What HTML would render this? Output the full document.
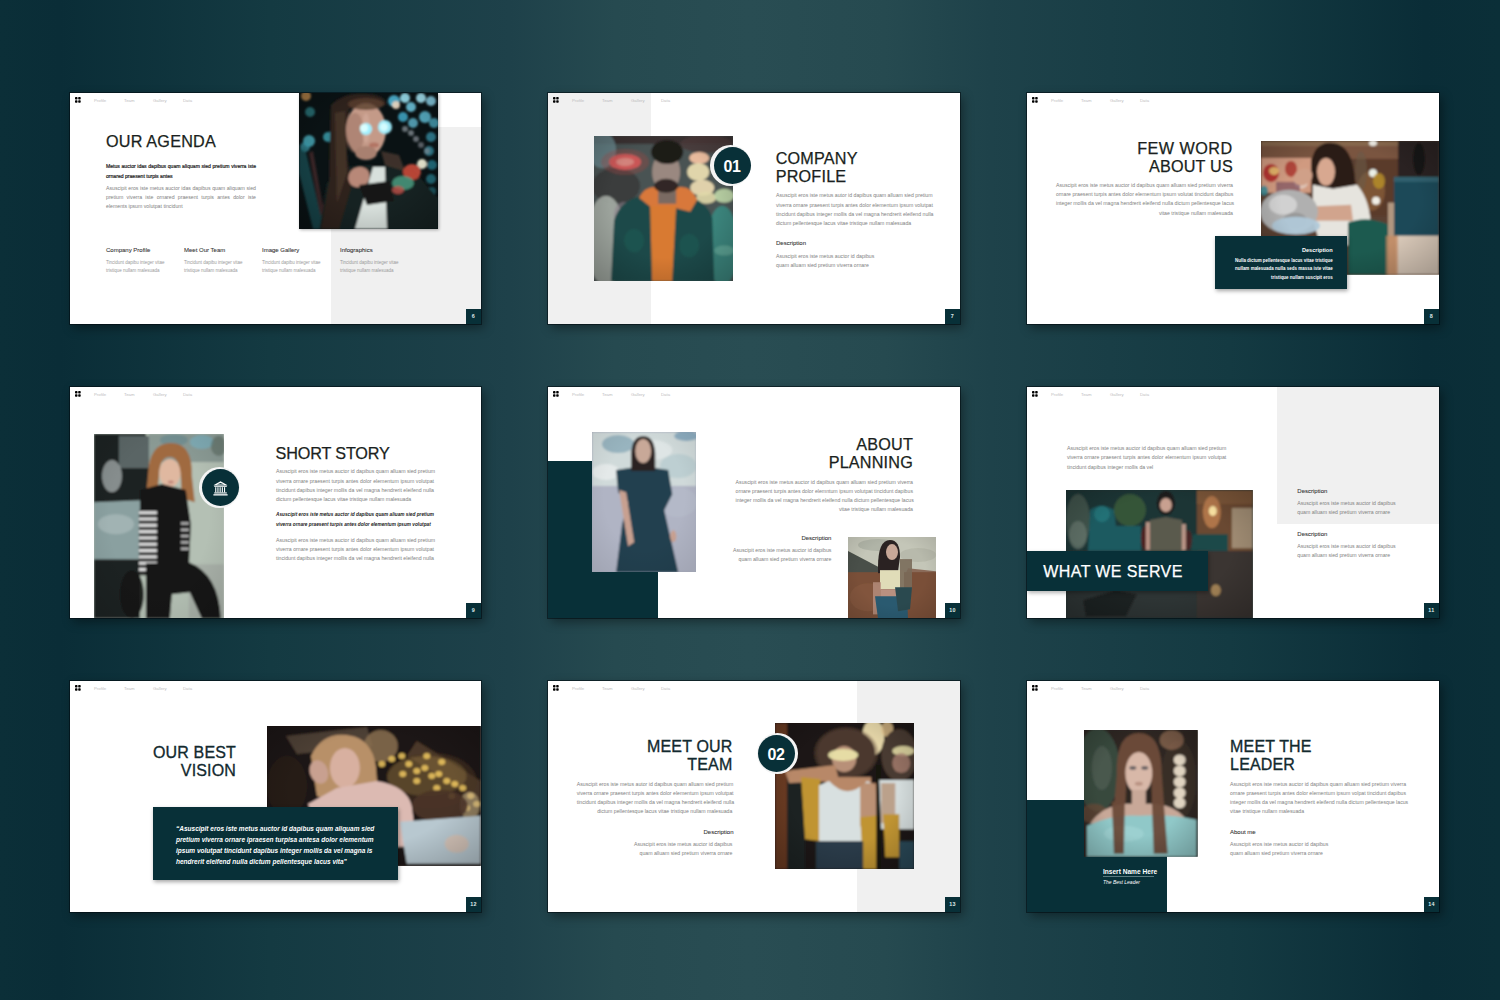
<!DOCTYPE html><html><head><meta charset="utf-8"><style>
*{margin:0;padding:0;box-sizing:border-box}
html,body{width:1500px;height:1000px;overflow:hidden}
body{position:relative;font-family:"Liberation Sans",sans-serif;
background:linear-gradient(90deg,#0b2f38 0%,#0a2d37 4%,#143a42 18%,#1e414a 34%,#264a50 41%,#294d53 50%,#264a50 59%,#1e424a 66%,#143a42 82%,#0a2d37 95%,#0b2f38 100%);}
.sl{position:absolute;height:231px;background:#fff;overflow:hidden;box-shadow:0 0 0 1px rgba(0,10,15,.55),3px 4px 10px rgba(0,0,0,.4)}
.t{position:absolute;white-space:nowrap;overflow:visible}
.ph{position:absolute;overflow:hidden}
.ph svg{display:block;width:100%;height:100%}
.ti{font-size:16.2px;color:#1a1f20;-webkit-text-stroke:0.25px #1a1f20;letter-spacing:0.2px}
.tib{font-size:16px;color:#12292e;-webkit-text-stroke:0.32px #12292e;letter-spacing:0.15px}
.tiw{font-size:16px;color:#fff;-webkit-text-stroke:0.25px #fff;letter-spacing:0.4px}
.bd{font-size:5.1px;color:#222;-webkit-text-stroke:0.2px #222}
.gy{font-size:5.2px;color:#828282}
.hd{font-size:6px;color:#333;-webkit-text-stroke:0.08px #333}
.hdw{font-size:5.6px;color:#fff;font-weight:bold}
.wt{font-size:4.45px;color:#fff;font-weight:bold}
.sm{font-size:4.5px;color:#9a9a9a}
.bi{font-size:4.74px;color:#222;font-weight:bold;font-style:italic}
.qt{font-size:6.5px;color:#fff;font-weight:bold;font-style:italic}
.nm{font-size:6.6px;color:#fff;font-weight:bold}
.it{font-size:5px;color:#fff;font-style:italic}
.nv{position:absolute;top:4.5px;font-size:4.3px;line-height:5px;color:#bdbdbd}
.ic{position:absolute;left:4.8px;top:4.3px;width:6px;height:6px}
.ic i{position:absolute;width:2.5px;height:2.5px;background:#000;border-radius:0.9px}
.ic i:nth-child(1){left:0;top:0}.ic i:nth-child(2){left:3px;top:0}.ic i:nth-child(3){left:0;top:3px}.ic i:nth-child(4){left:3px;top:3px}
.pn{position:absolute;top:216px;width:15px;height:15px;background:#083038;color:#dfe9ea;font-size:5.4px;font-weight:bold;line-height:15px;text-align:center;letter-spacing:0.3px}
.circ{position:absolute;width:37px;height:37px;border-radius:50%;background:#083038;color:#fff;font-size:16px;font-weight:bold;letter-spacing:-0.4px;line-height:37px;text-align:center;display:flex;align-items:center;justify-content:center;text-indent:-0.4px;padding-top:1.4px}
</style></head><body><div class="sl" style="left:70px;top:93px;width:411px;"><div style="position:absolute;left:261px;top:34px;width:150px;height:197px;background:#f0f0f0"></div><div class="ph" style="left:229px;top:0;width:139px;height:136px;box-shadow:1px 1px 3px rgba(0,0,0,.3)"><svg viewBox="0 0 139 136" preserveAspectRatio="none"><defs><filter id="fp1" x="-30%" y="-30%" width="160%" height="160%"><feGaussianBlur stdDeviation="1.1"/></filter><radialGradient id="vp1" cx="50%" cy="45%" r="70%"><stop offset="55%" stop-color="#000" stop-opacity="0"/><stop offset="100%" stop-color="#000" stop-opacity="0.22"/></radialGradient></defs><rect width="139" height="136" fill="#0a1214"/><g filter="url(#fp1)"><ellipse cx="7" cy="3" rx="5" ry="5" fill="#c89050" opacity="0.8"/><ellipse cx="11" cy="19" rx="5" ry="5" fill="#2a7a80" opacity="0.8"/><ellipse cx="29" cy="44" rx="5" ry="5" fill="#3a9aa8" opacity="0.85"/><ellipse cx="10" cy="48" rx="6" ry="6" fill="#4ab0c0" opacity="0.8"/><ellipse cx="6" cy="54" rx="5" ry="5" fill="#3a98a8" opacity="0.7"/><ellipse cx="95" cy="8" rx="6" ry="6" fill="#50b8d8" opacity="0.9"/><ellipse cx="97" cy="12" rx="4" ry="4" fill="#f0d8c0" opacity="0.9"/><ellipse cx="106" cy="5" rx="5" ry="5" fill="#9ae0f0" opacity="0.95"/><ellipse cx="112" cy="14" rx="5" ry="5" fill="#70c8e0" opacity="0.9"/><ellipse cx="122" cy="5" rx="5" ry="5" fill="#a8e8f8" opacity="0.95"/><ellipse cx="132" cy="8" rx="5" ry="5" fill="#90d8f0" opacity="0.9"/><ellipse cx="104" cy="24" rx="5" ry="5" fill="#40a8c8" opacity="0.85"/><ellipse cx="114" cy="30" rx="5" ry="5" fill="#60b8d0" opacity="0.8"/><ellipse cx="126" cy="24" rx="6" ry="6" fill="#60c0d8" opacity="0.85"/><ellipse cx="135" cy="30" rx="5" ry="5" fill="#50b0c8" opacity="0.8"/><ellipse cx="132" cy="44" rx="5" ry="5" fill="#3a98b0" opacity="0.75"/><ellipse cx="130" cy="58" rx="5" ry="5" fill="#3a9ab0" opacity="0.7"/><ellipse cx="133" cy="72" rx="5" ry="5" fill="#2a8aa0" opacity="0.7"/><ellipse cx="132" cy="86" rx="5" ry="5" fill="#2a8898" opacity="0.7"/><ellipse cx="133" cy="98" rx="4" ry="4" fill="#2a8090" opacity="0.6"/><ellipse cx="123" cy="71" rx="5" ry="5" fill="#e8e8d0" opacity="0.95"/><ellipse cx="106" cy="36" rx="3" ry="3" fill="#9098a0" opacity="0.7"/><ellipse cx="112" cy="40" rx="3" ry="3" fill="#9098a0" opacity="0.7"/><ellipse cx="117" cy="46" rx="3" ry="3" fill="#8a9098" opacity="0.7"/><ellipse cx="122" cy="52" rx="3" ry="3" fill="#8a9098" opacity="0.6"/><ellipse cx="128" cy="58" rx="3" ry="3" fill="#8a9098" opacity="0.6"/><path d="M0 57 L6 55 L25 136 L14 136 L0 80 Z" fill="#1a6068" opacity="0.6"/><path d="M10 60 L14 58 L28 136 L24 136 Z" fill="#804040" opacity="0.4"/><path d="M20 136 L28 90 L45 75 L60 72 L90 72 L115 78 L139 105 L139 136 Z" fill="#182220" opacity="1"/><path d="M32 12 Q45 -2 70 1 Q88 3 87 12 L50 16 L48 60 L52 95 L40 136 L22 136 L30 90 L31 40 Z" fill="#2e221c" opacity="1"/><path d="M36 20 L46 18 L48 80 L38 110 Z" fill="#5a4838" opacity="0.45"/><path d="M82 58 L100 62 L106 78 L86 72 Z" fill="#4a3a30" opacity="0.8"/><ellipse cx="67" cy="37" rx="20" ry="27" fill="#c49a88" opacity="1"/><ellipse cx="56" cy="40" rx="9" ry="20" fill="#9a7060" opacity="0.5"/><ellipse cx="67" cy="60" rx="11" ry="7" fill="#a88070" opacity="1"/><ellipse cx="67" cy="35" rx="4" ry="15" fill="#d8b0a0" opacity="0.5"/><ellipse cx="67" cy="11" rx="18" ry="6" fill="#5a4030" opacity="0.8"/><ellipse cx="67" cy="36" rx="6" ry="6" fill="#a0f0ff" opacity="1"/><ellipse cx="86" cy="34" rx="7" ry="7" fill="#a0f0ff" opacity="0.95"/><ellipse cx="65" cy="35" rx="4" ry="4" fill="#e0ffff" opacity="0.9"/><ellipse cx="85" cy="34" rx="4" ry="4" fill="#e0ffff" opacity="0.8"/><ellipse cx="75" cy="52" rx="5" ry="2.5" fill="#b07060" opacity="0.9"/><ellipse cx="60" cy="84" rx="11" ry="10" fill="#b88878" opacity="1" transform="rotate(-30 60 84)"/><path d="M74 74 L86 74 L88 136 L56 136 Z" fill="#d8e0dc" opacity="1"/><path d="M60 92 L90 88 L95 108 L68 112 Z" fill="#121816" opacity="1"/><ellipse cx="113" cy="79" rx="9" ry="8" fill="#c04838" opacity="0.95"/><ellipse cx="104" cy="90" rx="11" ry="7" fill="#4a9a80" opacity="0.85"/><ellipse cx="99" cy="97" rx="6" ry="4" fill="#c05048" opacity="0.8"/></g><rect width="139" height="136" fill="url(#vp1)"/></svg></div><div class="t ti" style="left:36px;top:38.70px;width:200px;height:18px;line-height:18px;text-align:left;">OUR AGENDA</div><div class="t bd" style="left:36px;top:69.20px;width:150px;height:9px;line-height:9px;text-align:left;text-align:justify;text-align-last:justify;">Metus auctor idas dapibus quam aliquam sied pretium viverra iste</div><div class="t bd" style="left:36px;top:78.70px;width:150px;height:9px;line-height:9px;text-align:left;">ornared praesent turpis antes</div><div class="t gy" style="left:36px;top:90.80px;width:150px;height:9px;line-height:9px;text-align:left;text-align:justify;text-align-last:justify;">Asuscipit eros iste metus auctor idas dapibus quam aliquam sied</div><div class="t gy" style="left:36px;top:99.90px;width:150px;height:9px;line-height:9px;text-align:left;text-align:justify;text-align-last:justify;">pretium viverra iste ornared praesent turpis antes dolor iste</div><div class="t gy" style="left:36px;top:109.10px;width:150px;height:9px;line-height:9px;text-align:left;">elements ipsum volutpat tincidunt</div><div class="t hd" style="left:36px;top:153.20px;width:70px;height:9px;line-height:9px;text-align:left;">Company Profile</div><div class="t sm" style="left:36px;top:166.00px;width:70px;height:8px;line-height:8px;text-align:left;">Tincidunt dapibu integer vitae</div><div class="t sm" style="left:36px;top:173.90px;width:70px;height:8px;line-height:8px;text-align:left;">tristique nullam malesuada</div><div class="t hd" style="left:114px;top:153.20px;width:70px;height:9px;line-height:9px;text-align:left;">Meet Our Team</div><div class="t sm" style="left:114px;top:166.00px;width:70px;height:8px;line-height:8px;text-align:left;">Tincidunt dapibu integer vitae</div><div class="t sm" style="left:114px;top:173.90px;width:70px;height:8px;line-height:8px;text-align:left;">tristique nullam malesuada</div><div class="t hd" style="left:192px;top:153.20px;width:70px;height:9px;line-height:9px;text-align:left;">Image Gallery</div><div class="t sm" style="left:192px;top:166.00px;width:70px;height:8px;line-height:8px;text-align:left;">Tincidunt dapibu integer vitae</div><div class="t sm" style="left:192px;top:173.90px;width:70px;height:8px;line-height:8px;text-align:left;">tristique nullam malesuada</div><div class="t hd" style="left:270px;top:153.20px;width:70px;height:9px;line-height:9px;text-align:left;">Infographics</div><div class="t sm" style="left:270px;top:166.00px;width:70px;height:8px;line-height:8px;text-align:left;">Tincidunt dapibu integer vitae</div><div class="t sm" style="left:270px;top:173.90px;width:70px;height:8px;line-height:8px;text-align:left;">tristique nullam malesuada</div><svg class="ic" width="6" height="6" viewBox="0 0 6 6"><rect x="0" y="0" width="2.5" height="2.5" rx="0.7" fill="#000"/><rect x="3.2" y="0" width="2.5" height="2.5" rx="0.7" fill="#000"/><rect x="0" y="3.2" width="2.5" height="2.5" rx="0.7" fill="#000"/><rect x="3.2" y="3.2" width="2.5" height="2.5" rx="0.7" fill="#000"/></svg><div class="nv" style="left:24px">Profile</div><div class="nv" style="left:54px">Team</div><div class="nv" style="left:83px">Gallery</div><div class="nv" style="left:113px">Data</div><div class="pn" style="left:396px">6</div></div><div class="sl" style="left:548px;top:93px;width:412px;"><div style="position:absolute;left:0px;top:0px;width:103px;height:231px;background:#f0f0f0"></div><div class="ph" style="left:45.7px;top:42.5px;width:139.3px;height:145.5px;"><svg viewBox="0 0 139 146" preserveAspectRatio="none"><defs><filter id="fp2" x="-30%" y="-30%" width="160%" height="160%"><feGaussianBlur stdDeviation="1.2"/></filter><radialGradient id="vp2" cx="50%" cy="45%" r="70%"><stop offset="55%" stop-color="#000" stop-opacity="0"/><stop offset="100%" stop-color="#000" stop-opacity="0.22"/></radialGradient></defs><rect width="139" height="146" fill="#4a5252"/><g filter="url(#fp2)"><rect x="0" y="0" width="139" height="146" fill="#4a5252" opacity="1"/><rect x="0" y="0" width="139" height="8" fill="#3a3232" opacity="1"/><ellipse cx="8" cy="14" rx="14" ry="18" fill="#6a8a90" opacity="0.8"/><ellipse cx="22" cy="50" rx="24" ry="18" fill="#3a3a3a" opacity="0.9"/><ellipse cx="12" cy="105" rx="20" ry="45" fill="#a0a8a0" opacity="0.95"/><ellipse cx="30" cy="80" rx="10" ry="14" fill="#8a7a88" opacity="0.5"/><ellipse cx="31" cy="26" rx="16" ry="8" fill="#e86060" opacity="0.95"/><ellipse cx="31" cy="26" rx="9" ry="4" fill="#f0a8a0" opacity="0.9"/><ellipse cx="31" cy="26" rx="24" ry="13" fill="#a04a48" opacity="0.35"/><ellipse cx="112" cy="8" rx="26" ry="9" fill="#4a3a3a" opacity="0.9"/><ellipse cx="105" cy="22" rx="10" ry="6" fill="#f0c0a0" opacity="0.95"/><ellipse cx="104" cy="36" rx="11" ry="9" fill="#e8dcb0" opacity="0.95"/><ellipse cx="108" cy="52" rx="12" ry="8" fill="#e8d8b0" opacity="0.95"/><ellipse cx="112" cy="62" rx="10" ry="6" fill="#e0d8a8" opacity="0.9"/><ellipse cx="130" cy="60" rx="10" ry="7" fill="#c0d8a8" opacity="0.9"/><ellipse cx="128" cy="110" rx="16" ry="40" fill="#3a8a80" opacity="0.9"/><ellipse cx="130" cy="115" rx="10" ry="5" fill="#70b0a0" opacity="0.6"/><path d="M17 146 L20 85 Q26 64 48 60 L90 60 Q112 64 118 82 L120 146 Z" fill="#1a4a48" opacity="1"/><ellipse cx="40" cy="105" rx="10" ry="12" fill="#235a55" opacity="0.6"/><ellipse cx="95" cy="110" rx="10" ry="12" fill="#235a55" opacity="0.6"/><path d="M45 62 Q52 48 66 52 L82 52 Q96 48 103 64 L96 76 L80 72 L60 74 Z" fill="#d8783a" opacity="1"/><path d="M56 70 L82 70 L78 146 L58 146 Z" fill="#d87a30" opacity="1"/><rect x="64" y="52" width="18" height="16" fill="#7a6a62" opacity="1"/><ellipse cx="72" cy="36" rx="14" ry="20" fill="#9a8880" opacity="1"/><ellipse cx="73" cy="16" rx="16" ry="12" fill="#1e1a18" opacity="1"/><ellipse cx="72" cy="50" rx="12" ry="7" fill="#2a2220" opacity="0.95"/></g><rect width="139" height="146" fill="url(#vp2)"/></svg></div><div style="position:absolute;left:162.25px;top:52.35px;width:40.7px;height:40.7px;border-radius:50%;background:#f4f4f4"></div><div class="circ" style="left:165.60px;top:54.10px;">01</div><div class="t ti" style="left:227.7px;top:56.00px;width:200px;height:18px;line-height:18px;text-align:left;">COMPANY</div><div class="t ti" style="left:227.7px;top:74.00px;width:200px;height:18px;line-height:18px;text-align:left;">PROFILE</div><div class="t gy" style="left:228px;top:98.20px;width:156px;height:9px;line-height:9px;text-align:left;text-align:justify;text-align-last:justify;">Asuscipit eros iste metus autor id dapibus quam alluam sied pretium</div><div class="t gy" style="left:228px;top:107.60px;width:156px;height:9px;line-height:9px;text-align:left;text-align:justify;text-align-last:justify;">viverra ornare praesent turpis antes dolor elementum ipsum volutpat</div><div class="t gy" style="left:228px;top:116.80px;width:156px;height:9px;line-height:9px;text-align:left;text-align:justify;text-align-last:justify;">tincidunt dapibus integer mollis da vel magna hendrerit eleifend nulla</div><div class="t gy" style="left:228px;top:125.90px;width:156px;height:9px;line-height:9px;text-align:left;">dictum pellentesque lacus vitae tristique nullam malesuada</div><div class="t hd" style="left:228px;top:146.40px;width:80px;height:9px;line-height:9px;text-align:left;">Description</div><div class="t gy" style="left:228px;top:159.20px;width:100px;height:9px;line-height:9px;text-align:left;">Asuscipit eros iste metus auctor id dapibus</div><div class="t gy" style="left:228px;top:168.20px;width:100px;height:9px;line-height:9px;text-align:left;">quam alluam sied pretium viverra ornare</div><svg class="ic" width="6" height="6" viewBox="0 0 6 6"><rect x="0" y="0" width="2.5" height="2.5" rx="0.7" fill="#000"/><rect x="3.2" y="0" width="2.5" height="2.5" rx="0.7" fill="#000"/><rect x="0" y="3.2" width="2.5" height="2.5" rx="0.7" fill="#000"/><rect x="3.2" y="3.2" width="2.5" height="2.5" rx="0.7" fill="#000"/></svg><div class="nv" style="left:24px">Profile</div><div class="nv" style="left:54px">Team</div><div class="nv" style="left:83px">Gallery</div><div class="nv" style="left:113px">Data</div><div class="pn" style="left:397px">7</div></div><div class="sl" style="left:1027px;top:93px;width:412px;"><div class="t ti" style="left:6px;top:45.50px;width:200px;height:18px;line-height:18px;text-align:right;letter-spacing:0.45px;margin-left:-0.45px">FEW WORD</div><div class="t ti" style="left:6px;top:64.10px;width:200px;height:18px;line-height:18px;text-align:right;">ABOUT US</div><div class="t gy" style="left:29px;top:87.80px;width:177px;height:9px;line-height:9px;text-align:right;text-align:justify;text-align-last:justify;">Asuscipit eros iste metus auctor id dapibus quam alluam sied pretium viverra</div><div class="t gy" style="left:29px;top:97.20px;width:177px;height:9px;line-height:9px;text-align:right;text-align:justify;text-align-last:justify;">ornare praesent turpis antes dolor elementum ipsum volutat tincidunt dapibus</div><div class="t gy" style="left:29px;top:106.40px;width:177px;height:9px;line-height:9px;text-align:right;text-align:justify;text-align-last:justify;">integer mollis da vel magna hendrerit eleifend nulla dictum pellentesque lacus</div><div class="t gy" style="left:29px;top:115.70px;width:177px;height:9px;line-height:9px;text-align:right;">vitae tristique nullam malesuada</div><div class="ph" style="left:234px;top:48px;width:178px;height:133.6px;"><svg viewBox="0 0 178 134" preserveAspectRatio="none"><defs><filter id="fp3" x="-30%" y="-30%" width="160%" height="160%"><feGaussianBlur stdDeviation="1.2"/></filter><radialGradient id="vp3" cx="50%" cy="45%" r="70%"><stop offset="55%" stop-color="#000" stop-opacity="0"/><stop offset="100%" stop-color="#000" stop-opacity="0.22"/></radialGradient></defs><rect width="178" height="134" fill="#4a3428"/><g filter="url(#fp3)"><rect x="0" y="0" width="178" height="134" fill="#5a4030" opacity="1"/><rect x="0" y="0" width="137" height="18" fill="#7a5540" opacity="1"/><rect x="0" y="0" width="137" height="5" fill="#8a6a50" opacity="1"/><rect x="94" y="18" width="43" height="57" fill="#5a3a2a" opacity="1"/><ellipse cx="110" cy="50" rx="14" ry="20" fill="#a07040" opacity="0.5"/><rect x="137" y="0" width="41" height="36" fill="#2a2420" opacity="1"/><ellipse cx="158" cy="18" rx="6" ry="16" fill="#141412" opacity="0.9"/><rect x="0" y="17" width="50" height="35" fill="#d09a80" opacity="1"/><ellipse cx="10" cy="32" rx="8" ry="9" fill="#b02a28" opacity="0.9"/><ellipse cx="13" cy="30" rx="5" ry="4" fill="#e8c070" opacity="0.9"/><ellipse cx="30" cy="28" rx="6" ry="8" fill="#a83028" opacity="0.8"/><ellipse cx="40" cy="42" rx="7" ry="6" fill="#e8e0d8" opacity="0.6"/><rect x="15" y="41" width="24" height="11" fill="#7a5060" opacity="0.7"/><ellipse cx="3" cy="50" rx="4" ry="5" fill="#2a8a98" opacity="0.8"/><ellipse cx="112" cy="2" rx="4" ry="3" fill="#f8f8f0" opacity="0.95"/><ellipse cx="112" cy="32" rx="4" ry="4" fill="#f0f8f0" opacity="0.95"/><ellipse cx="115" cy="60" rx="4" ry="4" fill="#f8f8f0" opacity="0.95"/><ellipse cx="117" cy="85" rx="4" ry="4" fill="#f8f8f0" opacity="0.9"/><ellipse cx="118" cy="40" rx="6" ry="8" fill="#b8902a" opacity="0.8"/><ellipse cx="100" cy="30" rx="6" ry="20" fill="#6a5a48" opacity="0.6"/><path d="M50 25 Q52 0 72 2 Q92 4 94 40 L96 56 L70 56 L52 55 Z" fill="#2a1a18" opacity="1"/><ellipse cx="65" cy="31" rx="9" ry="14" fill="#d8a890" opacity="1"/><ellipse cx="42" cy="36" rx="10" ry="8" fill="#d0a088" opacity="1" transform="rotate(-30 42 36)"/><path d="M52 44 L72 48 L96 44 Q110 60 110 90 L100 104 L60 106 L52 80 Z" fill="#e6e4de" opacity="1"/><path d="M43 66 L90 64 L92 80 L46 80 Z" fill="#d0a088" opacity="0.95"/><ellipse cx="28" cy="71" rx="29" ry="22" fill="#b0b0b0" opacity="1"/><ellipse cx="22" cy="64" rx="14" ry="10" fill="#e0e0e0" opacity="0.7"/><ellipse cx="34" cy="80" rx="12" ry="8" fill="#808080" opacity="0.5"/><ellipse cx="35" cy="85" rx="24" ry="9" fill="#b0c8d8" opacity="0.95"/><path d="M87 82 Q105 74 128 84 L134 134 L87 134 Z" fill="#1f5a50" opacity="1"/><rect x="127" y="62" width="51" height="72" fill="#d8c8b8" opacity="1"/><rect x="127" y="62" width="8" height="72" fill="#a88a70" opacity="0.8"/><rect x="133" y="36" width="45" height="59" fill="#1f4a58" opacity="1"/><rect x="133" y="36" width="45" height="5" fill="#3a6a78" opacity="0.7"/><rect x="125" y="95" width="12" height="39" fill="#c88a60" opacity="0.7"/></g><rect width="178" height="134" fill="url(#vp3)"/></svg></div><div style="position:absolute;left:188px;top:142.5px;width:132px;height:53px;background:#083038;box-shadow:1px 2px 4px rgba(0,0,0,.35)"></div><div class="t hdw" style="left:200px;top:153.20px;width:105.7px;height:9px;line-height:9px;text-align:right;">Description</div><div class="t wt" style="left:208px;top:164.05px;width:97.7px;height:8.5px;line-height:8.5px;text-align:right;text-align:justify;text-align-last:justify;">Nulla dictum pellentesque lacus vitae tristique</div><div class="t wt" style="left:208px;top:172.45px;width:97.7px;height:8.5px;line-height:8.5px;text-align:right;text-align:justify;text-align-last:justify;">nullam malesuada nulla seds massa iste vitae</div><div class="t wt" style="left:208px;top:181.05px;width:97.7px;height:8.5px;line-height:8.5px;text-align:right;">tristique nullam suscipit eros</div><svg class="ic" width="6" height="6" viewBox="0 0 6 6"><rect x="0" y="0" width="2.5" height="2.5" rx="0.7" fill="#000"/><rect x="3.2" y="0" width="2.5" height="2.5" rx="0.7" fill="#000"/><rect x="0" y="3.2" width="2.5" height="2.5" rx="0.7" fill="#000"/><rect x="3.2" y="3.2" width="2.5" height="2.5" rx="0.7" fill="#000"/></svg><div class="nv" style="left:24px">Profile</div><div class="nv" style="left:54px">Team</div><div class="nv" style="left:83px">Gallery</div><div class="nv" style="left:113px">Data</div><div class="pn" style="left:397px">8</div></div><div class="sl" style="left:70px;top:387px;width:411px;"><div class="ph" style="left:24px;top:46.6px;width:129.8px;height:184.4px;"><svg viewBox="0 0 130 184" preserveAspectRatio="none"><defs><filter id="fp4" x="-30%" y="-30%" width="160%" height="160%"><feGaussianBlur stdDeviation="1.0"/></filter><radialGradient id="vp4" cx="50%" cy="45%" r="70%"><stop offset="55%" stop-color="#000" stop-opacity="0"/><stop offset="100%" stop-color="#000" stop-opacity="0.1"/></radialGradient></defs><rect width="130" height="184" fill="#b4c0b4"/><g filter="url(#fp4)"><rect x="0" y="0" width="130" height="184" fill="#b4c0b4" opacity="1"/><rect x="55" y="0" width="75" height="28" fill="#8a9a94" opacity="1"/><ellipse cx="80" cy="6" rx="14" ry="6" fill="#6a8a90" opacity="0.7"/><ellipse cx="108" cy="8" rx="12" ry="7" fill="#7ab0c0" opacity="0.7"/><ellipse cx="125" cy="12" rx="8" ry="10" fill="#5a6a60" opacity="0.6"/><rect x="95" y="130" width="35" height="54" fill="#a8b0a8" opacity="1"/><path d="M0 0 L52 0 L56 40 L50 72 L0 72 Z" fill="#1e2424" opacity="1"/><rect x="25" y="2" width="30" height="32" fill="#5a6565" opacity="1"/><ellipse cx="18" cy="42" rx="10" ry="16" fill="#a0a8a8" opacity="0.8"/><path d="M0 68 L48 66 L46 125 L0 127 Z" fill="#8aa0a0" opacity="1"/><ellipse cx="22" cy="90" rx="18" ry="10" fill="#b0c0c0" opacity="0.6"/><rect x="0" y="125" width="46" height="59" fill="#1e2424" opacity="1"/><ellipse cx="38" cy="160" rx="12" ry="24" fill="#121414" opacity="0.9"/><path d="M54 42 Q55 9 77 9 Q99 9 98 42 L101 68 L88 64 L87 44 Q86 23 76 23 Q65 23 65 44 L63 62 L52 62 Z" fill="#a06a40" opacity="1"/><ellipse cx="76" cy="39" rx="10.5" ry="14" fill="#e0b8a0" opacity="1"/><ellipse cx="77" cy="48" rx="3" ry="1.5" fill="#b07068" opacity="0.7"/><path d="M46 56 L68 50 L92 56 L97 90 L95 133 L54 133 L46 100 Z" fill="#181818" opacity="1"/><rect x="45" y="76" width="18" height="65" fill="#2a2a2a" opacity="1"/><rect x="45" y="77.0" width="18" height="3" fill="#e8e8e8" opacity="0.95"/><rect x="45" y="83.3" width="18" height="3" fill="#e8e8e8" opacity="0.95"/><rect x="45" y="89.6" width="18" height="3" fill="#e8e8e8" opacity="0.95"/><rect x="45" y="95.9" width="18" height="3" fill="#e8e8e8" opacity="0.95"/><rect x="45" y="102.2" width="18" height="3" fill="#e8e8e8" opacity="0.95"/><rect x="45" y="108.5" width="18" height="3" fill="#e8e8e8" opacity="0.95"/><rect x="45" y="114.8" width="18" height="3" fill="#e8e8e8" opacity="0.95"/><rect x="45" y="121.1" width="18" height="3" fill="#e8e8e8" opacity="0.95"/><rect x="45" y="127.4" width="18" height="3" fill="#e8e8e8" opacity="0.95"/><rect x="45" y="133.7" width="18" height="3" fill="#e8e8e8" opacity="0.95"/><rect x="87" y="88.0" width="8" height="2.5" fill="#d8d8d8" opacity="0.8"/><rect x="87" y="94.3" width="8" height="2.5" fill="#d8d8d8" opacity="0.8"/><rect x="87" y="100.6" width="8" height="2.5" fill="#d8d8d8" opacity="0.8"/><rect x="87" y="106.9" width="8" height="2.5" fill="#d8d8d8" opacity="0.8"/><rect x="87" y="113.2" width="8" height="2.5" fill="#d8d8d8" opacity="0.8"/><ellipse cx="92" cy="140" rx="5" ry="6" fill="#d8b098" opacity="0.9"/><ellipse cx="60" cy="159" rx="5" ry="4" fill="#d8b098" opacity="0.9"/><path d="M52 129 L95 128 Q125 140 127 184 L108 184 L96 158 L78 160 L76 184 L52 184 Z" fill="#141414" opacity="1"/></g><rect width="130" height="184" fill="url(#vp4)"/></svg></div><div style="position:absolute;left:129.35px;top:80.15px;width:40.7px;height:40.7px;border-radius:50%;background:#f4f4f4"></div><div class="circ" style="left:132.30px;top:81.70px;"><svg width="15" height="15" viewBox="0 0 15 15" style="margin-top:1px"><path d="M7.5 0.3 L14.6 4.2 L0.4 4.2 Z" fill="#fff"/><path d="M7.5 1.9 L11.2 3.5 L3.8 3.5 Z" fill="#083038"/><rect x="1.2" y="4.6" width="12.6" height="1.2" fill="#fff"/><rect x="2.2" y="6.2" width="1.1" height="5.2" fill="#fff"/><rect x="4.4" y="6.2" width="1.1" height="5.2" fill="#fff"/><rect x="6.6" y="6.2" width="1.1" height="5.2" fill="#fff"/><rect x="8.8" y="6.2" width="1.1" height="5.2" fill="#fff"/><rect x="11" y="6.2" width="1.1" height="5.2" fill="#fff"/><rect x="1.2" y="11.4" width="12.6" height="1.1" fill="#fff"/><rect x="0.4" y="13.2" width="14.2" height="1.3" fill="#fff"/></svg></div><div class="t ti" style="left:205.6px;top:56.80px;width:200px;height:18px;line-height:18px;text-align:left;letter-spacing:-0.15px">SHORT STORY</div><div class="t gy" style="left:206px;top:80.10px;width:158px;height:9px;line-height:9px;text-align:left;text-align:justify;text-align-last:justify;">Asuscipit eros iste metus auctor id dapibus quam alluam sied pretium</div><div class="t gy" style="left:206px;top:89.60px;width:158px;height:9px;line-height:9px;text-align:left;text-align:justify;text-align-last:justify;">viverra ornare praesent turpis antes dolor elementum ipsum volutpat</div><div class="t gy" style="left:206px;top:98.70px;width:158px;height:9px;line-height:9px;text-align:left;text-align:justify;text-align-last:justify;">tincidunt dapibus integer mollis da vel magna hendrerit eleifend nulla</div><div class="t gy" style="left:206px;top:108.00px;width:158px;height:9px;line-height:9px;text-align:left;">dictum pellentesque lacus vitae tristique nullam malesuada</div><div class="t bi" style="left:206px;top:123.40px;width:158px;height:9px;line-height:9px;text-align:left;text-align:justify;text-align-last:justify;">Asuscipit eros iste metus auctor id dapibus quam aliuam sied pretium</div><div class="t bi" style="left:206px;top:132.70px;width:158px;height:9px;line-height:9px;text-align:left;">viverra ornare praesent turpis antes dolor elementum ipsum volutpat</div><div class="t gy" style="left:206px;top:148.90px;width:158px;height:9px;line-height:9px;text-align:left;text-align:justify;text-align-last:justify;">Asuscipit eros iste metus auctor id dapibus quam alluam sied pretium</div><div class="t gy" style="left:206px;top:158.00px;width:158px;height:9px;line-height:9px;text-align:left;text-align:justify;text-align-last:justify;">viverra ornare praesent turpis antes dolor elementum ipsum volutpat</div><div class="t gy" style="left:206px;top:167.20px;width:158px;height:9px;line-height:9px;text-align:left;text-align:justify;text-align-last:justify;">tincidunt dapibus integer mollis da vel magna hendrerit eleifend nulla</div><svg class="ic" width="6" height="6" viewBox="0 0 6 6"><rect x="0" y="0" width="2.5" height="2.5" rx="0.7" fill="#000"/><rect x="3.2" y="0" width="2.5" height="2.5" rx="0.7" fill="#000"/><rect x="0" y="3.2" width="2.5" height="2.5" rx="0.7" fill="#000"/><rect x="3.2" y="3.2" width="2.5" height="2.5" rx="0.7" fill="#000"/></svg><div class="nv" style="left:24px">Profile</div><div class="nv" style="left:54px">Team</div><div class="nv" style="left:83px">Gallery</div><div class="nv" style="left:113px">Data</div><div class="pn" style="left:396px">9</div></div><div class="sl" style="left:548px;top:387px;width:412px;"><div style="position:absolute;left:0px;top:74px;width:109.5px;height:157px;background:#083038"></div><div class="ph" style="left:43.6px;top:45px;width:104.4px;height:140.3px;"><svg viewBox="0 0 104 140" preserveAspectRatio="none"><defs><filter id="fp5" x="-30%" y="-30%" width="160%" height="160%"><feGaussianBlur stdDeviation="0.9"/></filter><radialGradient id="vp5" cx="50%" cy="45%" r="70%"><stop offset="55%" stop-color="#000" stop-opacity="0"/><stop offset="100%" stop-color="#000" stop-opacity="0.08"/></radialGradient></defs><rect width="104" height="140" fill="#a8aebe"/><g filter="url(#fp5)"><rect x="0" y="0" width="104" height="54" fill="#d0dada" opacity="1"/><ellipse cx="26" cy="12" rx="16" ry="9" fill="#8aaab8" opacity="0.8"/><ellipse cx="94" cy="4" rx="12" ry="5" fill="#7aa0b8" opacity="0.8"/><ellipse cx="86" cy="34" rx="18" ry="12" fill="#b8ccd0" opacity="0.8"/><ellipse cx="14" cy="40" rx="14" ry="8" fill="#e8ecec" opacity="0.8"/><ellipse cx="60" cy="18" rx="20" ry="10" fill="#e4eaea" opacity="0.7"/><rect x="0" y="54" width="104" height="86" fill="#b0b4c4" opacity="1"/><ellipse cx="85" cy="70" rx="20" ry="15" fill="#b8bccc" opacity="0.6"/><path d="M24 38 L50 34 L76 38 L80 62 L72 78 L86 140 L24 140 L30 92 L36 70 L26 60 Z" fill="#23404f" opacity="1"/><path d="M27 58 L34 60 L42 110 L36 114 Z" fill="#c8a090" opacity="1"/><ellipse cx="81" cy="104" rx="3" ry="6" fill="#c8a090" opacity="1"/><path d="M39 28 Q38 4 51 4 Q64 4 63 28 L63 39 L39 39 Z" fill="#2a2220" opacity="1"/><ellipse cx="51" cy="19" rx="8" ry="12" fill="#c8a898" opacity="1"/></g><rect width="104" height="140" fill="url(#vp5)"/></svg></div><div class="t ti" style="left:165px;top:48.00px;width:200px;height:18px;line-height:18px;text-align:right;">ABOUT</div><div class="t ti" style="left:165px;top:66.30px;width:200px;height:18px;line-height:18px;text-align:right;">PLANNING</div><div class="t gy" style="left:187.6px;top:90.60px;width:177.4px;height:9px;line-height:9px;text-align:right;text-align:justify;text-align-last:justify;">Asuscipit eros iste metus auctor id dapibus quam alluam sied pretium viverra</div><div class="t gy" style="left:187.6px;top:99.60px;width:177.4px;height:9px;line-height:9px;text-align:right;text-align:justify;text-align-last:justify;">ornare praesent turpis antes dolor elemntum ipsum volutpat tincidunt dapibus</div><div class="t gy" style="left:187.6px;top:108.80px;width:177.4px;height:9px;line-height:9px;text-align:right;text-align:justify;text-align-last:justify;">integer mollis da vel magna hendrerit eleifend nulla dictum pellentesque lacus</div><div class="t gy" style="left:187.6px;top:118.20px;width:177.4px;height:9px;line-height:9px;text-align:right;">vitae tristique nullam malesuada</div><div class="t hd" style="left:183.4px;top:146.60px;width:100px;height:9px;line-height:9px;text-align:right;">Description</div><div class="t gy" style="left:183.4px;top:159.20px;width:100px;height:9px;line-height:9px;text-align:right;">Asuscipit eros iste metus auctor id dapibus</div><div class="t gy" style="left:183.4px;top:167.80px;width:100px;height:9px;line-height:9px;text-align:right;">quam alluam sied pretium viverra ornare</div><div class="ph" style="left:300px;top:149.6px;width:88px;height:81.4px;"><svg viewBox="0 0 88 81" preserveAspectRatio="none"><defs><filter id="fp6" x="-30%" y="-30%" width="160%" height="160%"><feGaussianBlur stdDeviation="0.7"/></filter><radialGradient id="vp6" cx="50%" cy="45%" r="70%"><stop offset="55%" stop-color="#000" stop-opacity="0"/><stop offset="100%" stop-color="#000" stop-opacity="0.12"/></radialGradient></defs><rect width="88" height="81" fill="#7a5038"/><g filter="url(#fp6)"><rect x="0" y="0" width="88" height="36" fill="#c4c6b8" opacity="1"/><ellipse cx="30" cy="8" rx="20" ry="6" fill="#a8aca0" opacity="0.7"/><ellipse cx="70" cy="18" rx="18" ry="7" fill="#b0b2a4" opacity="0.6"/><path d="M0 14 L31 30 L40 36 L0 40 Z" fill="#4a5048" opacity="1"/><path d="M60 31 L88 34 L88 40 L56 40 Z" fill="#8a6a58" opacity="1"/><rect x="0" y="35" width="88" height="46" fill="#7a5038" opacity="1"/><ellipse cx="20" cy="60" rx="18" ry="14" fill="#8a5a40" opacity="0.5"/><path d="M30 30 Q30 3 42 3 Q52 3 52 20 L50 34 L30 36 Z" fill="#2a2220" opacity="1"/><ellipse cx="44" cy="15" rx="6" ry="8" fill="#c8a898" opacity="1"/><rect x="32" y="33" width="24" height="19" fill="#e0dcb8" opacity="1"/><rect x="52" y="22" width="12" height="30" fill="#7a6a5a" opacity="0.9"/><rect x="33" y="52" width="21" height="13" fill="#b89080" opacity="1"/><rect x="25" y="45" width="8" height="32" fill="#b89080" opacity="0.8"/><path d="M27 59 L59 59 L60 81 L30 81 Z" fill="#2a5a70" opacity="1"/><path d="M47 50 L64 50 L62 72 L50 74 Z" fill="#2a4a50" opacity="1"/></g><rect width="88" height="81" fill="url(#vp6)"/></svg></div><svg class="ic" width="6" height="6" viewBox="0 0 6 6"><rect x="0" y="0" width="2.5" height="2.5" rx="0.7" fill="#000"/><rect x="3.2" y="0" width="2.5" height="2.5" rx="0.7" fill="#000"/><rect x="0" y="3.2" width="2.5" height="2.5" rx="0.7" fill="#000"/><rect x="3.2" y="3.2" width="2.5" height="2.5" rx="0.7" fill="#000"/></svg><div class="nv" style="left:24px">Profile</div><div class="nv" style="left:54px">Team</div><div class="nv" style="left:83px">Gallery</div><div class="nv" style="left:113px">Data</div><div class="pn" style="left:397px">10</div></div><div class="sl" style="left:1027px;top:387px;width:412px;"><div style="position:absolute;left:249.8px;top:0px;width:162.2px;height:136.8px;background:#f0f0f0"></div><div class="t gy" style="left:40px;top:57.20px;width:159.3px;height:9px;line-height:9px;text-align:left;text-align:justify;text-align-last:justify;">Asuscipit eros iste metus auctor id dapibus quam alluam sied pretium</div><div class="t gy" style="left:40px;top:66.20px;width:159.3px;height:9px;line-height:9px;text-align:left;text-align:justify;text-align-last:justify;">viverra ornare praesent turpis antes dolor elementum ipsum volutpat</div><div class="t gy" style="left:40px;top:75.50px;width:159.3px;height:9px;line-height:9px;text-align:left;">tincidunt dapibus integer mollis da vel</div><div class="ph" style="left:39.2px;top:102.6px;width:186.8px;height:128.4px;"><svg viewBox="0 0 187 128" preserveAspectRatio="none"><defs><filter id="fp7" x="-30%" y="-30%" width="160%" height="160%"><feGaussianBlur stdDeviation="1.1"/></filter><radialGradient id="vp7" cx="50%" cy="45%" r="70%"><stop offset="55%" stop-color="#000" stop-opacity="0"/><stop offset="100%" stop-color="#000" stop-opacity="0.22"/></radialGradient></defs><rect width="187" height="128" fill="#1f3535"/><g filter="url(#fp7)"><rect x="0" y="0" width="131" height="61" fill="#1f3535" opacity="1"/><rect x="131" y="0" width="56" height="61" fill="#6a4a30" opacity="1"/><rect x="131" y="0" width="56" height="14" fill="#7a5538" opacity="1"/><ellipse cx="146" cy="22" rx="9" ry="16" fill="#c08050" opacity="0.8"/><ellipse cx="147" cy="21" rx="4" ry="5" fill="#f8e0a0" opacity="1"/><rect x="166" y="18" width="21" height="40" fill="#b8a890" opacity="0.7"/><ellipse cx="12" cy="30" rx="12" ry="26" fill="#4a5a52" opacity="0.8"/><ellipse cx="12" cy="45" rx="9" ry="14" fill="#6a7a70" opacity="0.7"/><path d="M22 61 L24 20 Q35 12 48 20 L50 36 L75 36 L75 61 Z" fill="#1a5a60" opacity="1"/><ellipse cx="36" cy="24" rx="8" ry="8" fill="#2a7a80" opacity="0.7"/><ellipse cx="64" cy="20" rx="16" ry="16" fill="#3a5a3a" opacity="0.85"/><ellipse cx="80" cy="48" rx="5" ry="12" fill="#5a2020" opacity="0.8"/><ellipse cx="122" cy="50" rx="4" ry="10" fill="#5a2020" opacity="0.7"/><path d="M125 61 L127 44 L162 44 L162 61 Z" fill="#1a4a4a" opacity="1"/><ellipse cx="100" cy="13" rx="9" ry="12" fill="#1e1a1a" opacity="1"/><ellipse cx="100" cy="15" rx="6" ry="7" fill="#c8a090" opacity="1"/><path d="M84 30 L100 27 L116 30 L118 61 L84 61 Z" fill="#5a5a4e" opacity="1"/><rect x="80" y="32" width="4" height="28" fill="#c8a090" opacity="0.9"/><rect x="116" y="34" width="4" height="26" fill="#c8a090" opacity="0.9"/><rect x="0" y="61" width="187" height="67" fill="#2e3434" opacity="1"/><rect x="131" y="61" width="56" height="67" fill="#3a3430" opacity="1"/><ellipse cx="150" cy="100" rx="5" ry="6" fill="#e8b870" opacity="0.6"/><path d="M17 110 L50 100 L71 104 L60 126 L20 126 Z" fill="#1e2424" opacity="1"/></g><rect width="187" height="128" fill="url(#vp7)"/></svg></div><div style="position:absolute;left:0px;top:164.3px;width:180.7px;height:39.7px;background:#083038;box-shadow:1px 2px 4px rgba(0,0,0,.3)"></div><div class="t tiw" style="left:16.3px;top:175.50px;width:200px;height:18px;line-height:18px;text-align:left;">WHAT WE SERVE</div><div class="t hd" style="left:270.3px;top:99.50px;width:100px;height:9px;line-height:9px;text-align:left;">Description</div><div class="t gy" style="left:270.3px;top:112.10px;width:100px;height:9px;line-height:9px;text-align:left;">Asuscipit eros iste metus auctor id dapibus</div><div class="t gy" style="left:270.3px;top:121.40px;width:100px;height:9px;line-height:9px;text-align:left;">quam alluam sied pretium viverra ornare</div><div class="t hd" style="left:270.3px;top:142.80px;width:100px;height:9px;line-height:9px;text-align:left;">Description</div><div class="t gy" style="left:270.3px;top:155.40px;width:100px;height:9px;line-height:9px;text-align:left;">Asuscipit eros iste metus auctor id dapibus</div><div class="t gy" style="left:270.3px;top:164.20px;width:100px;height:9px;line-height:9px;text-align:left;">quam alluam sied pretium viverra ornare</div><svg class="ic" width="6" height="6" viewBox="0 0 6 6"><rect x="0" y="0" width="2.5" height="2.5" rx="0.7" fill="#000"/><rect x="3.2" y="0" width="2.5" height="2.5" rx="0.7" fill="#000"/><rect x="0" y="3.2" width="2.5" height="2.5" rx="0.7" fill="#000"/><rect x="3.2" y="3.2" width="2.5" height="2.5" rx="0.7" fill="#000"/></svg><div class="nv" style="left:24px">Profile</div><div class="nv" style="left:54px">Team</div><div class="nv" style="left:83px">Gallery</div><div class="nv" style="left:113px">Data</div><div class="pn" style="left:397px">11</div></div><div class="sl" style="left:70px;top:681px;width:411px;"><div class="t tib" style="left:-34px;top:63.00px;width:200px;height:18px;line-height:18px;text-align:right;">OUR BEST</div><div class="t tib" style="left:-34px;top:81.30px;width:200px;height:18px;line-height:18px;text-align:right;">VISION</div><div class="ph" style="left:197.3px;top:45px;width:213.7px;height:139.8px;"><svg viewBox="0 0 214 140" preserveAspectRatio="none"><defs><filter id="fp8" x="-30%" y="-30%" width="160%" height="160%"><feGaussianBlur stdDeviation="1.2"/></filter><radialGradient id="vp8" cx="50%" cy="45%" r="70%"><stop offset="55%" stop-color="#000" stop-opacity="0"/><stop offset="100%" stop-color="#000" stop-opacity="0.22"/></radialGradient></defs><rect width="214" height="140" fill="#1e1612"/><g filter="url(#fp8)"><rect x="0" y="0" width="214" height="140" fill="#1e1612" opacity="1"/><path d="M19 10 L100 1 L106 20 L30 28 Z" fill="#5a4a40" opacity="0.8"/><ellipse cx="114" cy="20" rx="17" ry="16" fill="#8a7050" opacity="0.85"/><ellipse cx="20" cy="60" rx="20" ry="30" fill="#2a201a" opacity="0.8"/><path d="M150 15 L214 55 L214 75 L140 30 Z" fill="#6a5038" opacity="0.6"/><ellipse cx="165" cy="55" rx="45" ry="28" fill="#4a3828" opacity="0.5"/><ellipse cx="160" cy="50" rx="40" ry="20" fill="#c8a050" opacity="0.25"/><ellipse cx="115" cy="38" rx="3.5" ry="3" fill="#f0c860" opacity="0.85"/><ellipse cx="125" cy="33" rx="3.5" ry="3" fill="#f0c860" opacity="0.85"/><ellipse cx="135" cy="30" rx="3.5" ry="3" fill="#f0c860" opacity="0.85"/><ellipse cx="142" cy="38" rx="3.5" ry="3" fill="#f0c860" opacity="0.85"/><ellipse cx="150" cy="45" rx="3.5" ry="3" fill="#f0c860" opacity="0.85"/><ellipse cx="158" cy="42" rx="3.5" ry="3" fill="#f0c860" opacity="0.85"/><ellipse cx="165" cy="50" rx="3.5" ry="3" fill="#f0c860" opacity="0.85"/><ellipse cx="172" cy="48" rx="3.5" ry="3" fill="#f0c860" opacity="0.85"/><ellipse cx="180" cy="55" rx="3.5" ry="3" fill="#f0c860" opacity="0.85"/><ellipse cx="188" cy="58" rx="3.5" ry="3" fill="#f0c860" opacity="0.85"/><ellipse cx="196" cy="62" rx="3.5" ry="3" fill="#f0c860" opacity="0.85"/><ellipse cx="204" cy="70" rx="3.5" ry="3" fill="#f0c860" opacity="0.85"/><ellipse cx="210" cy="78" rx="3.5" ry="3" fill="#f0c860" opacity="0.85"/><ellipse cx="170" cy="62" rx="3.5" ry="3" fill="#f0c860" opacity="0.85"/><ellipse cx="185" cy="70" rx="3.5" ry="3" fill="#f0c860" opacity="0.85"/><ellipse cx="200" cy="82" rx="3.5" ry="3" fill="#f0c860" opacity="0.85"/><ellipse cx="150" cy="55" rx="3.5" ry="3" fill="#f0c860" opacity="0.85"/><ellipse cx="136" cy="48" rx="3.5" ry="3" fill="#f0c860" opacity="0.85"/><ellipse cx="160" cy="30" rx="3.5" ry="3" fill="#f0c860" opacity="0.85"/><ellipse cx="175" cy="36" rx="3.5" ry="3" fill="#f0c860" opacity="0.85"/><ellipse cx="203" cy="80" rx="10" ry="14" fill="#d8c090" opacity="0.6"/><path d="M44 30 Q55 6 80 9 Q105 12 109 40 L112 78 L70 78 L50 70 Z" fill="#b89068" opacity="1"/><ellipse cx="78" cy="42" rx="15" ry="20" fill="#d8b0a0" opacity="1"/><ellipse cx="52" cy="46" rx="9" ry="12" fill="#c8a090" opacity="1" transform="rotate(-20 52 46)"/><path d="M41 78 L70 62 L110 55 Q140 60 145 80 L150 121 L60 121 Z" fill="#dcbab2" opacity="1"/><ellipse cx="173" cy="80" rx="28" ry="16" fill="#4a3428" opacity="0.9"/><path d="M133 96 L214 90 L214 138 L140 138 Z" fill="#b8c8d0" opacity="1"/><ellipse cx="190" cy="118" rx="12" ry="9" fill="#d8c0b0" opacity="0.8"/></g><rect width="214" height="140" fill="url(#vp8)"/></svg></div><div style="position:absolute;left:82.7px;top:126px;width:245.3px;height:73.2px;background:#083038;box-shadow:1px 2px 4px rgba(0,0,0,.35)"></div><div class="t qt" style="left:106px;top:143.20px;width:200px;height:10px;line-height:10px;text-align:left;">&ldquo;Asuscipit eros iste metus auctor id dapibus quam aliquam sied</div><div class="t qt" style="left:106px;top:154.20px;width:200px;height:10px;line-height:10px;text-align:left;">pretium viverra ornare ipraesen turpisa antesa dolor elementum</div><div class="t qt" style="left:106px;top:165.00px;width:200px;height:10px;line-height:10px;text-align:left;">ipsum volutpat tincidunt dapibus integer mollis da vel magna is</div><div class="t qt" style="left:106px;top:175.70px;width:200px;height:10px;line-height:10px;text-align:left;">hendrerit eleifend nulla dictum pellentesque lacus vita&rdquo;</div><svg class="ic" width="6" height="6" viewBox="0 0 6 6"><rect x="0" y="0" width="2.5" height="2.5" rx="0.7" fill="#000"/><rect x="3.2" y="0" width="2.5" height="2.5" rx="0.7" fill="#000"/><rect x="0" y="3.2" width="2.5" height="2.5" rx="0.7" fill="#000"/><rect x="3.2" y="3.2" width="2.5" height="2.5" rx="0.7" fill="#000"/></svg><div class="nv" style="left:24px">Profile</div><div class="nv" style="left:54px">Team</div><div class="nv" style="left:83px">Gallery</div><div class="nv" style="left:113px">Data</div><div class="pn" style="left:396px">12</div></div><div class="sl" style="left:548px;top:681px;width:412px;"><div style="position:absolute;left:308.6px;top:0px;width:103.39999999999998px;height:231px;background:#f0f0f0"></div><div class="t tib" style="left:-15.6px;top:56.70px;width:200px;height:18px;line-height:18px;text-align:right;">MEET OUR</div><div class="t tib" style="left:-15.6px;top:75.00px;width:200px;height:18px;line-height:18px;text-align:right;">TEAM</div><div class="t gy" style="left:28.7px;top:98.60px;width:155.7px;height:9px;line-height:9px;text-align:right;text-align:justify;text-align-last:justify;">Asuscipit eros iste metus autor id dapibus quam alluam sied pretium</div><div class="t gy" style="left:28.7px;top:107.70px;width:155.7px;height:9px;line-height:9px;text-align:right;text-align:justify;text-align-last:justify;">viverra ornare praesent turpis antes dolor elementum ipsum volutpat</div><div class="t gy" style="left:28.7px;top:116.80px;width:155.7px;height:9px;line-height:9px;text-align:right;text-align:justify;text-align-last:justify;">tincidunt dapibus integer mollis da vel magna hendrerit eleifend nulla</div><div class="t gy" style="left:28.7px;top:126.20px;width:155.7px;height:9px;line-height:9px;text-align:right;">dictum pellentesque lacus vitae tristique nullam malesuada</div><div class="t hd" style="left:85.5px;top:146.60px;width:100px;height:9px;line-height:9px;text-align:right;">Description</div><div class="t gy" style="left:84.4px;top:159.20px;width:100px;height:9px;line-height:9px;text-align:right;">Asuscipit eros iste metus auctor id dapibus</div><div class="t gy" style="left:84.4px;top:168.40px;width:100px;height:9px;line-height:9px;text-align:right;">quam alluam sied pretium viverra ornare</div><div class="ph" style="left:227.2px;top:42.2px;width:139.3px;height:146.3px;"><svg viewBox="0 0 139 146" preserveAspectRatio="none"><defs><filter id="fp9" x="-30%" y="-30%" width="160%" height="160%"><feGaussianBlur stdDeviation="1.3"/></filter><radialGradient id="vp9" cx="50%" cy="45%" r="70%"><stop offset="55%" stop-color="#000" stop-opacity="0"/><stop offset="100%" stop-color="#000" stop-opacity="0.22"/></radialGradient></defs><rect width="139" height="146" fill="#1e1814"/><g filter="url(#fp9)"><rect x="0" y="0" width="139" height="146" fill="#1e1814" opacity="1"/><rect x="0" y="0" width="12" height="146" fill="#6a3a20" opacity="1"/><rect x="12" y="54" width="18" height="92" fill="#1a2224" opacity="1"/><ellipse cx="98" cy="14" rx="11" ry="18" fill="#f0e0b0" opacity="0.95"/><ellipse cx="112" cy="6" rx="6" ry="8" fill="#e8c890" opacity="0.8"/><ellipse cx="71" cy="30" rx="29" ry="24" fill="#3a2a22" opacity="1"/><ellipse cx="71" cy="30" rx="32" ry="26" fill="#6a5040" opacity="0.4"/><ellipse cx="69" cy="36" rx="12" ry="13" fill="#b89078" opacity="1"/><ellipse cx="68" cy="32" rx="15" ry="6" fill="#e8e0a8" opacity="0.95"/><path d="M10 48 L60 42 L64 58 L14 60 Z" fill="#b88868" opacity="1"/><path d="M26 54 L45 56 L46 118 L30 116 Z" fill="#c09430" opacity="1"/><rect x="50" y="54" width="46" height="20" fill="#b88868" opacity="1"/><path d="M44 62 L54 58 Q72 78 92 58 L100 62 Q103 90 100 118 L44 118 Z" fill="#d8e0e0" opacity="1"/><rect x="85" y="60" width="16" height="43" fill="#b88868" opacity="0.9"/><path d="M85 94 L103 92 L104 146 L88 146 Z" fill="#c09430" opacity="1"/><rect x="41" y="118" width="47" height="28" fill="#2a3a48" opacity="1"/><rect x="101" y="42" width="5" height="104" fill="#141210" opacity="1"/><ellipse cx="124" cy="32" rx="18" ry="26" fill="#4a3a30" opacity="1"/><ellipse cx="128" cy="28" rx="11" ry="5" fill="#e8e0a8" opacity="0.9"/><ellipse cx="126" cy="40" rx="9" ry="10" fill="#a88070" opacity="0.8"/><path d="M104 57 L139 57 L139 106 L106 106 Z" fill="#d4dcdc" opacity="1"/><rect x="106" y="60" width="14" height="40" fill="#b08868" opacity="0.7"/><path d="M108 91 L124 91 L124 134 L110 134 Z" fill="#c09430" opacity="1"/><rect x="124" y="118" width="15" height="28" fill="#2a4a58" opacity="1"/></g><rect width="139" height="146" fill="url(#vp9)"/></svg></div><div style="position:absolute;left:209.45px;top:52.45px;width:40.7px;height:40.7px;border-radius:50%;background:#f4f4f4"></div><div class="circ" style="left:209.70px;top:54.20px;">02</div><svg class="ic" width="6" height="6" viewBox="0 0 6 6"><rect x="0" y="0" width="2.5" height="2.5" rx="0.7" fill="#000"/><rect x="3.2" y="0" width="2.5" height="2.5" rx="0.7" fill="#000"/><rect x="0" y="3.2" width="2.5" height="2.5" rx="0.7" fill="#000"/><rect x="3.2" y="3.2" width="2.5" height="2.5" rx="0.7" fill="#000"/></svg><div class="nv" style="left:24px">Profile</div><div class="nv" style="left:54px">Team</div><div class="nv" style="left:83px">Gallery</div><div class="nv" style="left:113px">Data</div><div class="pn" style="left:397px">13</div></div><div class="sl" style="left:1027px;top:681px;width:412px;"><div style="position:absolute;left:0px;top:118.7px;width:140px;height:112.3px;background:#083038"></div><div class="ph" style="left:57.4px;top:49.1px;width:113.6px;height:126.7px;"><svg viewBox="0 0 114 127" preserveAspectRatio="none"><defs><filter id="fp10" x="-30%" y="-30%" width="160%" height="160%"><feGaussianBlur stdDeviation="1.0"/></filter><radialGradient id="vp10" cx="50%" cy="45%" r="70%"><stop offset="55%" stop-color="#000" stop-opacity="0"/><stop offset="100%" stop-color="#000" stop-opacity="0.22"/></radialGradient></defs><rect width="114" height="127" fill="#2e2824"/><g filter="url(#fp10)"><rect x="0" y="0" width="114" height="127" fill="#2e2824" opacity="1"/><ellipse cx="14" cy="40" rx="22" ry="42" fill="#3a4a40" opacity="0.95"/><ellipse cx="18" cy="38" rx="10" ry="22" fill="#56655a" opacity="0.6"/><ellipse cx="10" cy="84" rx="14" ry="10" fill="#6a4a38" opacity="0.7"/><ellipse cx="95" cy="50" rx="18" ry="40" fill="#3a3028" opacity="0.8"/><ellipse cx="88" cy="10" rx="12" ry="10" fill="#b08060" opacity="0.55"/><ellipse cx="96" cy="30" rx="6" ry="5.5" fill="#e8dcc8" opacity="0.95"/><ellipse cx="96" cy="41" rx="6" ry="5.5" fill="#e8dcc8" opacity="0.95"/><ellipse cx="96" cy="52" rx="6" ry="5.5" fill="#e8dcc8" opacity="0.95"/><ellipse cx="96" cy="63" rx="6" ry="5.5" fill="#e8dcc8" opacity="0.95"/><ellipse cx="96" cy="73" rx="6" ry="5.5" fill="#e8dcc8" opacity="0.95"/><path d="M33 44 Q32 3 55 3 Q78 3 78 44 L84 124 L70 124 L68 62 Q67 26 55 25 Q43 26 42 62 L40 124 L26 124 Z" fill="#6a4a38" opacity="1"/><ellipse cx="55" cy="43" rx="13.5" ry="21" fill="#d8b8a8" opacity="1"/><ellipse cx="49" cy="38" rx="3.5" ry="1.8" fill="#4a4a50" opacity="0.8"/><ellipse cx="61" cy="38" rx="3.5" ry="1.8" fill="#4a4a50" opacity="0.8"/><ellipse cx="55" cy="54" rx="4" ry="2" fill="#b08878" opacity="0.8"/><rect x="48" y="60" width="14" height="16" fill="#c8a898" opacity="1"/><path d="M6 94 Q18 76 42 74 L70 74 Q94 76 104 92 Z" fill="#c8a898" opacity="1"/><path d="M3 96 Q30 84 55 86 Q85 84 113 90 L113 127 L3 127 Z" fill="#90c8c8" opacity="1"/><ellipse cx="40" cy="104" rx="20" ry="8" fill="#a8d8d8" opacity="0.5"/><path d="M28 72 L41 70 L40 124 L30 124 Z" fill="#6a4a38" opacity="0.95"/><path d="M68 70 L80 72 L84 124 L70 124 Z" fill="#6a4a38" opacity="0.95"/></g><rect width="114" height="127" fill="url(#vp10)"/></svg></div><div class="t nm" style="left:75.9px;top:186.20px;width:80px;height:9px;line-height:9px;text-align:left;">Insert Name Here</div><div style="position:absolute;left:75.9px;top:195.4px;width:51px;height:0.9px;background:#5a7a80"></div><div class="t it" style="left:75.9px;top:196.60px;width:80px;height:9px;line-height:9px;text-align:left;">The Best Leader</div><div class="t tib" style="left:203.1px;top:56.70px;width:200px;height:18px;line-height:18px;text-align:left;">MEET THE</div><div class="t tib" style="left:203.1px;top:75.00px;width:200px;height:18px;line-height:18px;text-align:left;">LEADER</div><div class="t gy" style="left:203px;top:98.60px;width:176px;height:9px;line-height:9px;text-align:left;text-align:justify;text-align-last:justify;">Asuscipit eros iste metus auctor id dapibus quam alluam sied pretium viverra</div><div class="t gy" style="left:203px;top:107.70px;width:176px;height:9px;line-height:9px;text-align:left;text-align:justify;text-align-last:justify;">ornare praesent turpis antes dolor elementum ipsum volpat tincidunt dapibus</div><div class="t gy" style="left:203px;top:116.80px;width:176px;height:9px;line-height:9px;text-align:left;text-align:justify;text-align-last:justify;">integer mollis da vel magna hendrerit eleifend nulla dictum pellentesque lacus</div><div class="t gy" style="left:203px;top:126.20px;width:176px;height:9px;line-height:9px;text-align:left;">vitae tristique nullam malesuada</div><div class="t hd" style="left:203px;top:146.60px;width:80px;height:9px;line-height:9px;text-align:left;">About me</div><div class="t gy" style="left:203px;top:159.20px;width:100px;height:9px;line-height:9px;text-align:left;">Asuscipit eros iste metus auctor id dapibus</div><div class="t gy" style="left:203px;top:168.40px;width:100px;height:9px;line-height:9px;text-align:left;">quam alluam sied pretium viverra ornare</div><svg class="ic" width="6" height="6" viewBox="0 0 6 6"><rect x="0" y="0" width="2.5" height="2.5" rx="0.7" fill="#000"/><rect x="3.2" y="0" width="2.5" height="2.5" rx="0.7" fill="#000"/><rect x="0" y="3.2" width="2.5" height="2.5" rx="0.7" fill="#000"/><rect x="3.2" y="3.2" width="2.5" height="2.5" rx="0.7" fill="#000"/></svg><div class="nv" style="left:24px">Profile</div><div class="nv" style="left:54px">Team</div><div class="nv" style="left:83px">Gallery</div><div class="nv" style="left:113px">Data</div><div class="pn" style="left:397px">14</div></div></body></html>
